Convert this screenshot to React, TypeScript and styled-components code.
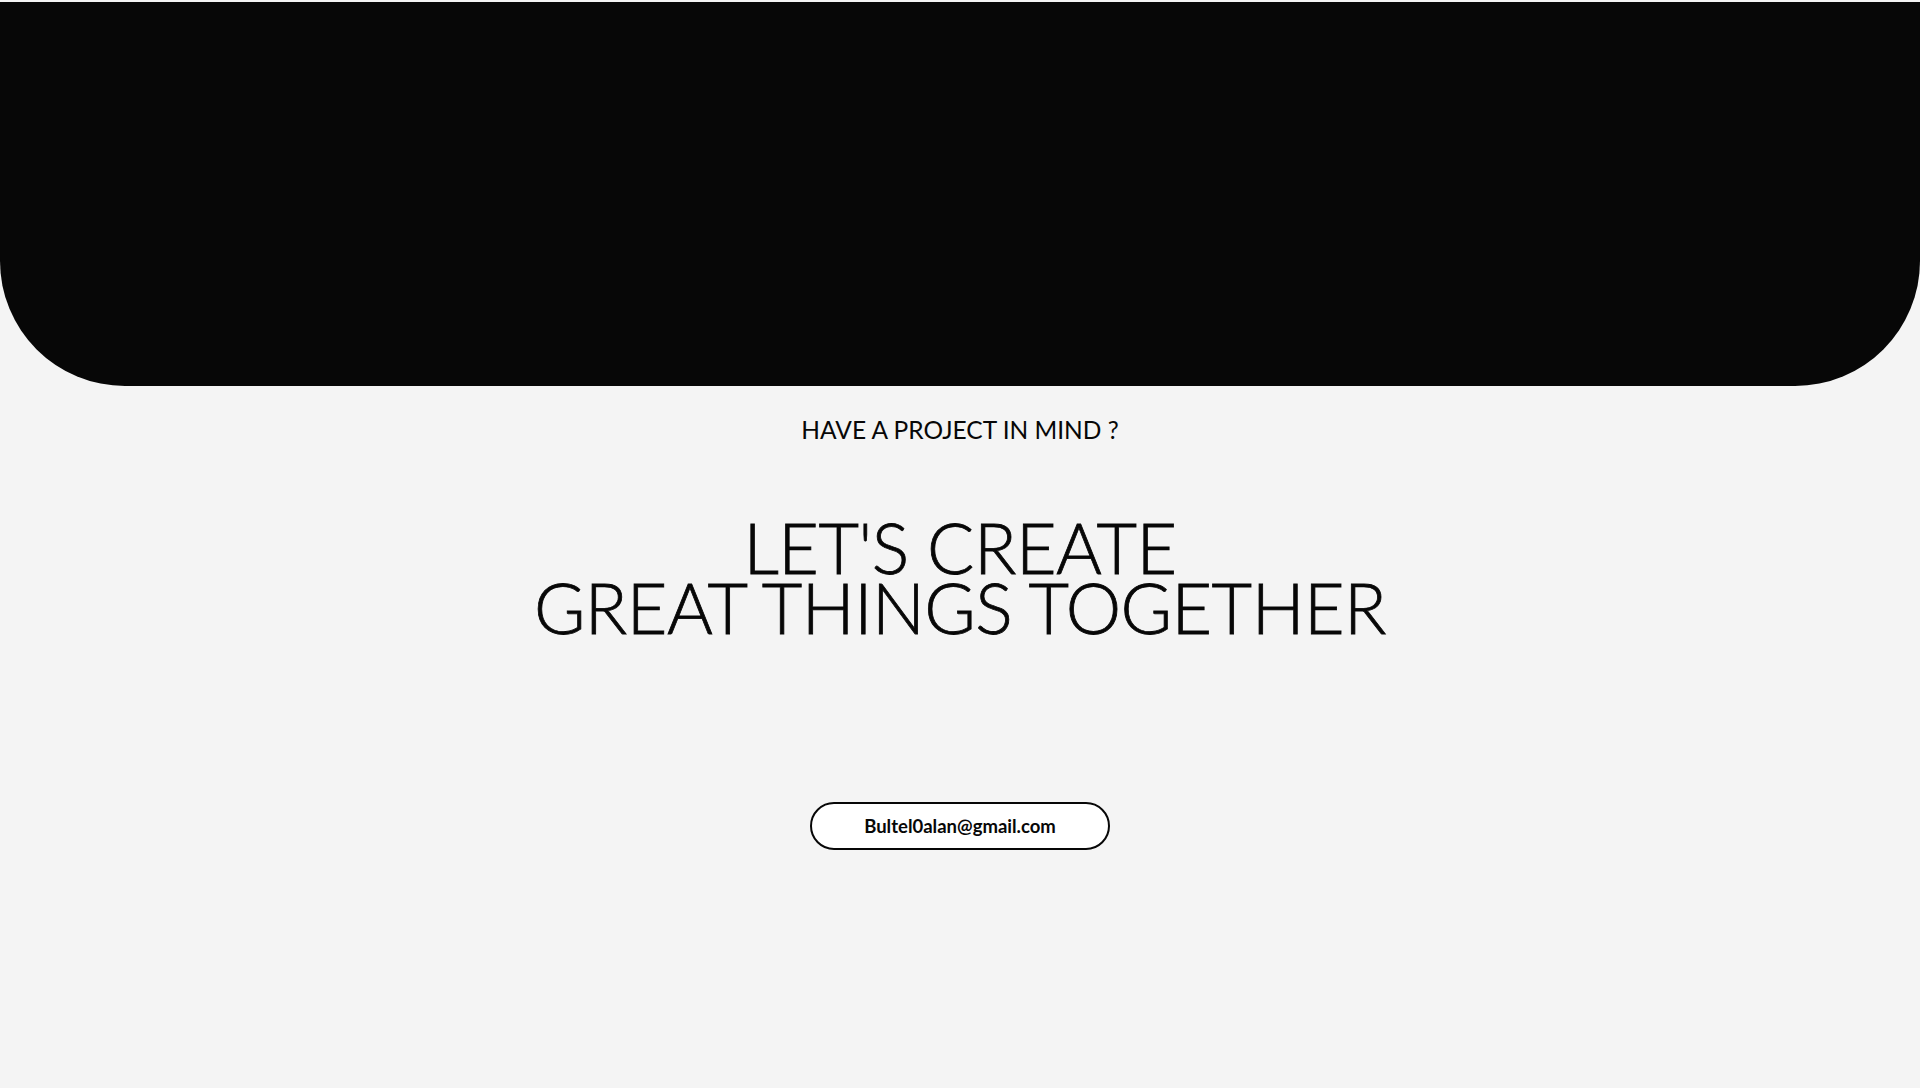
import React from "react";
import styled, { createGlobalStyle } from "styled-components";

const Global = createGlobalStyle`
  html, body {
    margin: 0;
    padding: 0;
    background: #f4f4f4;
  }
  body {
    font-family: Lato, "Noto Sans", sans-serif;
    color: #070707;
  }
`;

const Page = styled.main`
  min-height: 1088px;
  padding-top: 2px;
  box-sizing: border-box;
  display: flex;
  flex-direction: column;
  align-items: center;
`;

const Hero = styled.section`
  align-self: stretch;
  height: 384px;
  background: #070707;
  border-radius: 0 0 125px 125px;
`;

const Eyebrow = styled.p`
  margin: 29px 0 0;
  font-size: 24.5px;
  line-height: 30px;
  font-weight: 400;
  text-transform: uppercase;
`;

const Heading = styled.h1`
  margin: 72px 0 0;
  font-size: 70px;
  line-height: 60px;
  font-weight: 300;
  text-align: center;
  letter-spacing: -0.5px;
  -webkit-text-stroke: 0.8px #070707;
`;

const Line = styled.span`
  display: block;
`;

const Mail = styled.a`
  margin-top: 165px;
  width: 300px;
  height: 48px;
  box-sizing: border-box;
  border: 2px solid #070707;
  border-radius: 24px;
  background: #ffffff;
  display: flex;
  align-items: center;
  justify-content: center;
  font-size: 18.5px;
  font-weight: 700;
  color: #070707;
  text-decoration: none;
`;

export default function App() {
  return (
    <>
      <Global />
      <Page>
        <Hero />
        <Eyebrow>Have a project in mind ?</Eyebrow>
        <Heading>
          <Line>LET'S CREATE</Line>
          <Line>GREAT THINGS TOGETHER</Line>
        </Heading>
        <Mail href="mailto:Bultel0alan@gmail.com">Bultel0alan@gmail.com</Mail>
      </Page>
    </>
  );
}
